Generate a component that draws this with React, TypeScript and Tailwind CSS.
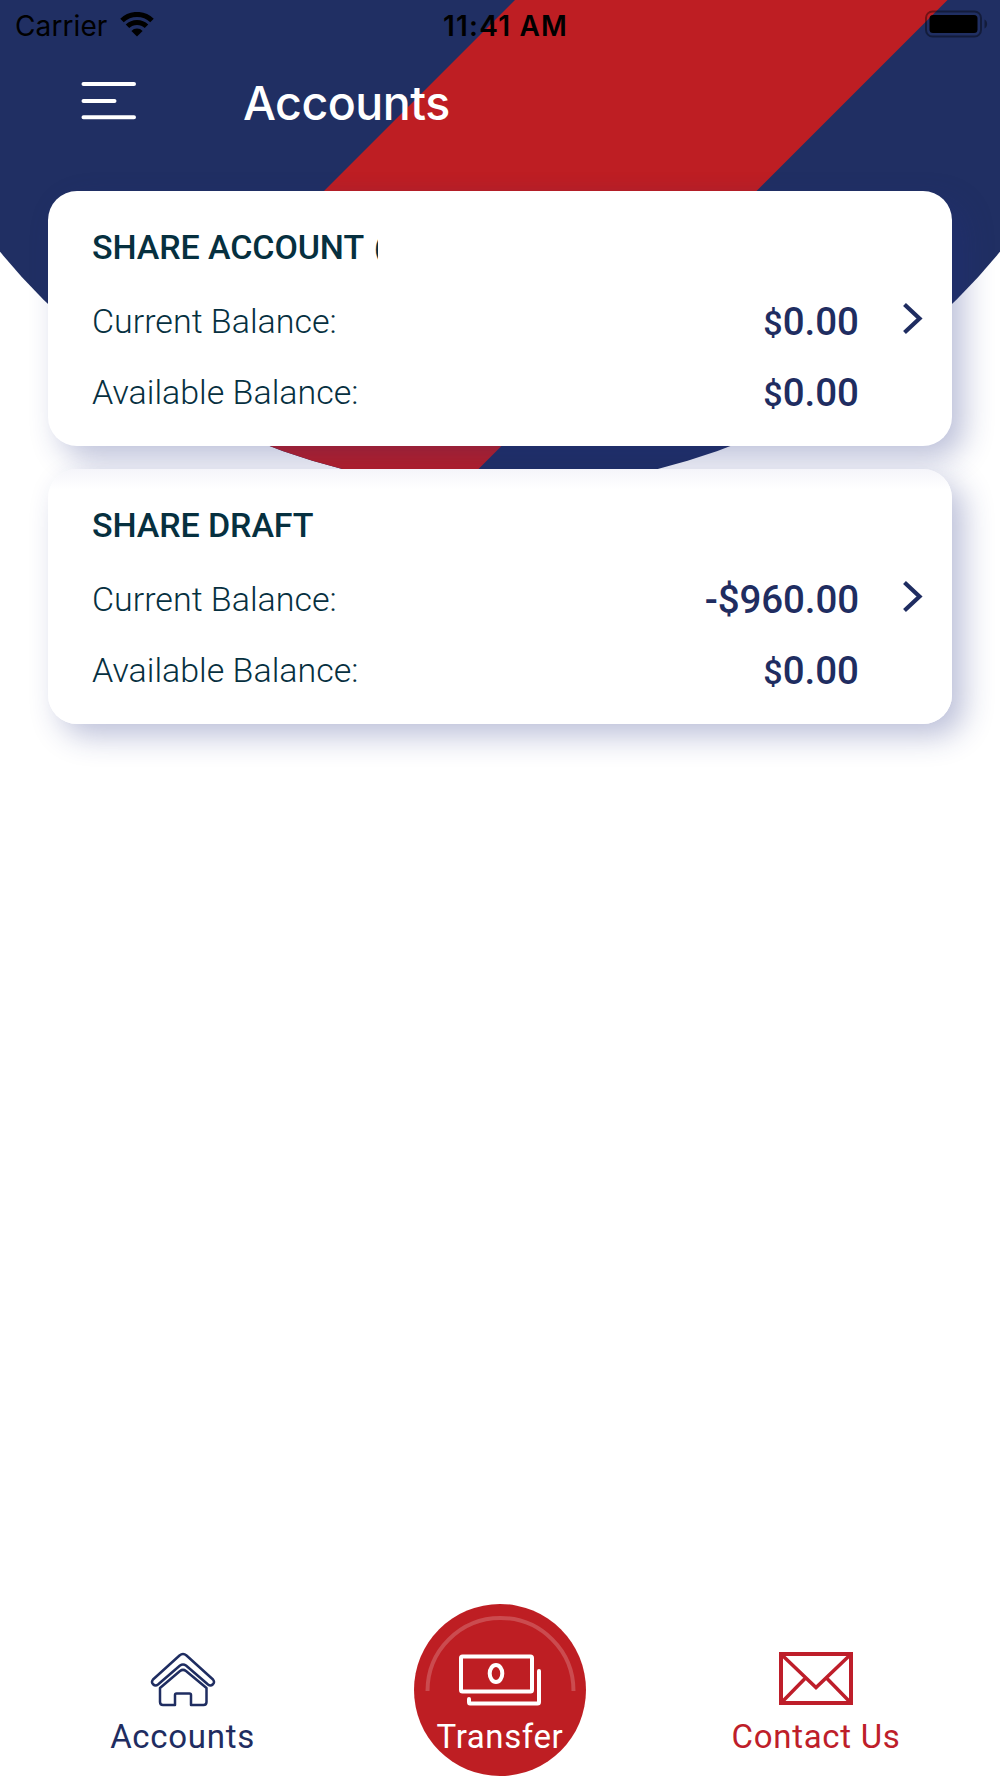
type Account = {
  name: string
  truncated?: boolean
  current: string
  available: string
}

const accounts: Account[] = [
  {
    name: "SHARE ACCOUNT",
    truncated: true,
    current: "$0.00",
    available: "$0.00",
  },
  { name: "SHARE DRAFT", current: "-$960.00", available: "$0.00" },
]

function HeaderBackground() {
  return (
    <svg
      className="absolute top-0 left-0 -z-10"
      width="1000"
      height="490"
      viewBox="0 0 1000 490"
    >
      <defs>
        <clipPath id="dome">
          <circle cx="500" cy="-157.6" r="646.2" />
        </clipPath>
      </defs>
      <g clipPath="url(#dome)">
        <rect width="1000" height="490" fill="#202f63" />
        <path d="M515 0H947.500L457.500 490H25Z" fill="#be1e23" />
      </g>
    </svg>
  )
}

function StatusBar() {
  return (
    <div className="flex h-[51px] items-center justify-between pr-[12px] pl-[15px] font-['Inter',sans-serif] text-[28px] text-black">
      <div className="flex w-[300px] items-center gap-[13px]">
        <span className="tracking-[0.1px]">Carrier</span>
        <svg className="-mt-[2px]" width="34" height="25" viewBox="0 0 34 25">
          <path
            d="M2 8.5a21.5 21.5 0 0 1 30 0M7.5 14.3a13.6 13.6 0 0 1 19 0"
            fill="none"
            stroke="#000"
            strokeWidth="5"
          />
          <path d="M17 24.5l-5.600-5.600a8 8 0 0 1 11.200 0z" />
        </svg>
      </div>
      <span className="ml-[8px] font-semibold tracking-[1.2px]">11:41 AM</span>
      <div className="flex w-[300px] justify-end">
        <svg className="-mt-[3px]" width="64" height="28" viewBox="0 0 64 28">
          <rect
            x="2"
            y="1.5"
            width="55"
            height="25"
            rx="6.5"
            fill="none"
            stroke="#000"
            strokeOpacity="0.4"
            strokeWidth="2"
          />
          <rect x="5.5" y="5" width="48" height="18" rx="3.5" />
          <path d="M60.500 9.500c3.500 1.500 3.500 7.500 0 9z" opacity="0.4" />
        </svg>
      </div>
    </div>
  )
}

function Header() {
  return (
    <header className="flex h-[140px] items-start pl-[81px]">
      <svg
        className="mt-[30px]"
        width="56"
        height="40"
        viewBox="0 0 56 40"
        stroke="#fff"
        strokeWidth="4"
        strokeLinecap="round"
      >
        <path d="M2.500 3H53M2.500 20H33.500M2.500 36.300H53" />
      </svg>
      <h1 className="mt-[22px] ml-[106px] font-['Inter',sans-serif] text-[46.5px] leading-[60px] font-medium tracking-[-0.5px] text-white">
        Accounts
      </h1>
    </header>
  )
}

function Amount({ value }: { value: string }) {
  // positive amounts carry a smaller currency sign
  if (value.startsWith("$")) {
    return (
      <span>
        <span className="text-[34px] leading-none">$</span>
        {value.slice(1)}
      </span>
    )
  }
  return <span className="tracking-[-0.1px]">{value}</span>
}

function AccountCard({ account, index }: { account: Account; index: number }) {
  return (
    <section
      className={`flex h-[255px] rounded-[29px] pl-[44px] shadow-[12px_12px_30px_rgba(32,46,130,0.3)] ${
        index > 0
          ? "bg-[linear-gradient(#f5f5fa,#ffffff_20px)]"
          : "bg-white"
      }`}
    >
      <div className="flex-1 text-[34px] font-light text-[#06303f]">
        <div className="mt-[35px] flex h-[42px] items-center font-medium">
          <h2 className="tracking-[-0.1px]">{account.name}</h2>
          {account.truncated && (
            <span className="ml-[10px] w-[4px] overflow-hidden text-[30px]">
              (
            </span>
          )}
        </div>
        <p className="mt-[31px] leading-[44px]">Current Balance:</p>
        <p className="mt-[27px] leading-[44px]">Available Balance:</p>
      </div>
      <div className="-mr-[1px] mt-[109px] flex flex-col items-end gap-[27px] text-[38.5px] leading-[44px] font-medium text-[#1f2d61]">
        <Amount value={account.current} />
        <Amount value={account.available} />
      </div>
      <svg
        className="mt-[111px] mr-[28px] ml-[44px]"
        width="22"
        height="34"
        viewBox="0 0 22 34"
        fill="none"
        stroke="#1f2d61"
        strokeWidth="4.200"
      >
        <path d="M2.500 2.500L17.500 16.500L2.500 30.500" />
      </svg>
    </section>
  )
}

function HouseIcon() {
  return (
    <svg
      width="66"
      height="56"
      viewBox="0 0 66 56"
      fill="none"
      stroke="#1f2d61"
      strokeWidth="2.500"
      strokeLinejoin="round"
    >
      <path d="M29.500 3.500Q33 .5 36.500 3.500L63 27.500Q65 30 63 32.300Q60.500 34.500 58 32.500L36 13.500Q33 11.500 30 13.500L8 32.500Q5.500 34.500 3 32.300Q1 30 3 27.500Z" />
      <path d="M10 36L30 19Q33 16.800 36 19L56.500 36V50Q56.500 53 53.500 53H41V43Q41 41.500 39.500 41.500H26.500Q25 41.500 25 43V53H13Q10 53 10 50Z" />
    </svg>
  )
}

function TransferIcon() {
  return (
    <svg
      width="84"
      height="54"
      viewBox="0 0 84 54"
      fill="none"
      stroke="#fff"
      strokeWidth="4"
      strokeLinejoin="round"
    >
      <rect x="3" y="3.500" width="71" height="35" rx="1.500" />
      <ellipse cx="38" cy="20.500" rx="6.300" ry="8.500" strokeWidth="4" />
      <path
        d="M81 18V49Q81 50.500 79.500 50.500H12Q11 50.500 11 49V46"
        strokeLinecap="round"
      />
    </svg>
  )
}

function MailIcon() {
  return (
    <svg
      width="74"
      height="53"
      viewBox="0 0 74 53"
      fill="none"
      stroke="#be1e2a"
    >
      <rect x="2" y="2" width="70" height="49" strokeWidth="4" />
      <path d="M4 4L37 35.500L70 4M4 49L26 26.500M70 49L48 26.500" strokeWidth="3.500" />
    </svg>
  )
}

export default function App() {
  return (
    <div className="relative isolate flex h-[1778px] w-[1000px] flex-col overflow-hidden bg-white font-['Roboto',sans-serif]">
      <HeaderBackground />
      <StatusBar />
      <Header />
      <main className="flex flex-1 flex-col gap-[23px] px-[48px]">
        {accounts.map((account, index) => (
          <AccountCard key={account.name} account={account} index={index} />
        ))}
      </main>
      <nav className="flex h-[174px] pl-[110px] text-[33px] leading-[40px]">
        <a className="flex w-[145px] flex-col items-center pt-[48px] text-[#1f2d61]">
          <HouseIcon />
          <span className="mt-[9px] tracking-[0.7px]">Accounts</span>
        </a>
        <a className="relative ml-[159px] flex h-[172px] w-[172px] flex-col items-center rounded-full bg-[#be1e23] pt-[49px] text-white">
          <svg
            className="absolute top-0 left-0"
            width="172"
            height="172"
            viewBox="0 0 172 172"
          >
            <path
              d="M13.500 87A73 73 0 0 1 159.500 87"
              fill="none"
              stroke="#fff"
              strokeOpacity="0.2"
              strokeWidth="4"
            />
          </svg>
          <TransferIcon />
          <span className="mt-[10px] tracking-[0.6px]">Transfer</span>
        </a>
        <a className="ml-[146px] flex w-[168px] flex-col items-center pt-[48px] text-[#be1e2a]">
          <MailIcon />
          <span className="mt-[12px] tracking-[0.7px] whitespace-nowrap">
            Contact Us
          </span>
        </a>
      </nav>
    </div>
  )
}
